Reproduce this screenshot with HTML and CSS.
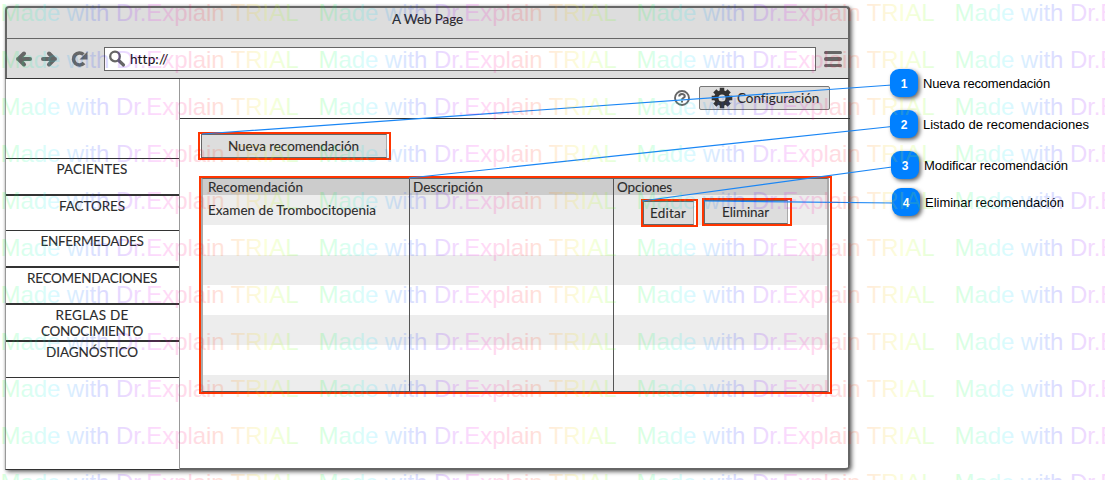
FILE: index.html
```html
<!DOCTYPE html>
<html lang="es">
<head>
<meta charset="utf-8">
<title>A Web Page</title>
<link rel="stylesheet" href="styles.css">
</head>
<body>
<main class="window">
  <header class="chrome">
    <div class="titlebar"><span class="page-title">A Web Page</span></div>
    <div class="toolbar">
      <svg class="nav-icons" width="78" height="24" viewBox="0 0 78 24" fill="none" stroke="#666" stroke-width="4" stroke-linecap="round" stroke-linejoin="round">
        <path d="M3 12H15M9 6.500L3.500 12L9 17.500"/>
        <path d="M28 12H40M34 6.500L39.500 12L34 17.500"/>
        <path d="M69 16A6 6 0 1 1 68.500 7.500" stroke-width="3.600" stroke-linecap="butt"/>
        <path d="M72.500 4.500V12.500H64.500Z" fill="#666" stroke="none"/>
      </svg>
      <div class="address">
        <svg width="18" height="18" viewBox="0 0 18 18" fill="none" stroke="#666"><circle cx="7" cy="6.500" r="4.800" stroke-width="2.300"/><path d="M10.800 10.500L15.500 15" stroke-width="3.200" stroke-linecap="round"/></svg>
        <span class="url">http://</span>
      </div>
      <div class="burger"><i></i><i></i><i></i></div>
    </div>
  </header>
  <div class="body">
    <nav class="sidebar">
      <div class="logo-space"></div>
      <div class="item h36"><span class="t-pac">PACIENTES</span></div>
      <div class="item h36 thick"><span class="t-fac">FACTORES</span></div>
      <div class="item h36"><span class="t-enf">ENFERMEDADES</span></div>
      <div class="item h37 thick"><span class="t-rec">RECOMENDACIONES</span></div>
      <div class="item h37 thick"><span class="t-reg">REGLAS DE</span><span class="t-con">CONOCIMIENTO</span></div>
      <div class="item h37 thick"><span class="t-dia">DIAGNÓSTICO</span></div>
      <div class="rest"></div>
    </nav>
    <section class="content">
      <div class="topbar">
        <svg width="18" height="18" viewBox="0 0 18 18" fill="none" stroke="#666"><circle cx="9" cy="9" r="7" stroke-width="1.900"/><path d="M6.200 7.600C6.200 4.300 11.800 4.300 11.800 7.200C11.800 9 9 8.700 9 10.500" stroke-width="2"/><path d="M9 11.700V13.500" stroke-width="2"/></svg>
        <div class="config">
          <svg width="22" height="22" viewBox="-11 -11 22 22"><g stroke="#333" stroke-width="4.500"><path d="M0 -10.300V-6M0 10.300V6M-10.300 0H-6M10.300 0H6M-7.200 -7.200L-4.500 -4.500M7.200 7.200L4.500 4.500M7.200 -7.200L4.500 -4.500M-7.200 7.200L-4.500 4.500"/><circle r="5.700" fill="none" stroke-width="4.300"/></g></svg>
          <span class="t-conf">Configuración</span>
        </div>
      </div>
      <div class="mark new"><div class="btn"><span class="t-new">Nueva recomendación</span></div></div>
      <div class="mark list">
        <div class="grid">
          <div class="col c1"><div class="head"><span class="t-h1">Recomendación</span></div><div class="cell"><span class="t-exam">Examen de Trombocitopenia</span></div></div>
          <div class="col c2"><div class="head"><span class="t-h2">Descripción</span></div></div>
          <div class="col c3"><div class="head"><span class="t-h3">Opciones</span></div>
            <div class="actions">
              <div class="mark edit"><div class="btn"><span class="t-edit">Editar</span></div></div>
              <div class="mark del"><div class="btn"><span class="t-del">Eliminar</span></div></div>
            </div>
          </div>
        </div>
      </div>
    </section>
  </div>
</main>

<svg class="overlay" width="1105" height="480" stroke="#1a86f5" stroke-width="1.200">
  <path d="M202 134L892 85M409 178L892 126.500M642 201L892 167M704 201L894 203" fill="none"/>
</svg>
<div class="callout n1"><b>1</b><span>Nueva recomendación</span></div>
<div class="callout n2"><b>2</b><span>Listado de recomendaciones</span></div>
<div class="callout n3"><b>3</b><span>Modificar recomendación</span></div>
<div class="callout n4"><b>4</b><span>Eliminar recomendación</span></div>

<svg class="overlay watermark" width="1105" height="480"></svg>
<script src="watermark.js"></script>
</body>
</html>
```
FILE: styles.css
```css
* { box-sizing: border-box; }
body { margin: 0; padding: 6px 0 0 5px; width: 1105px; height: 480px; overflow: hidden; position: relative; background: #fff; color: #2b2b2b; font: 13.5px/16px Lato, "Liberation Sans", sans-serif; -webkit-text-stroke: .1px; }
span { white-space: nowrap; }
svg { display: block; flex: none; }

.window { width: 845px; height: 464px; border-radius: 4px 4px 5px 0; background: linear-gradient(#666, #666) right / 2px 100% no-repeat #fff; border-bottom: 2px solid #666; box-shadow: 2px 2px 4px rgba(0, 0, 0, .55), 0 0 3px rgba(0, 0, 0, .2); }
.chrome { height: 73px; background: #ddd; border: solid #666; border-width: 2px 2px 0; border-bottom: 1px solid #333; border-radius: 4px 4px 0 0; }
.titlebar { height: 31px; border-bottom: 1px solid #666; text-align: center; padding-top: 3px; }
.toolbar { height: 39px; display: flex; align-items: flex-start; padding-top: 8px; }
.nav-icons { margin: 0 11px 0 8px; }
.address { width: 712px; height: 24px; border: 1px solid #666; background: #fff; display: flex; align-items: center; padding-left: 3px; gap: 4px; color: #111; }
.burger { margin: 4px 0 0 8px; display: grid; gap: 3px; }
.burger i { width: 18px; height: 3.300px; border-radius: 2px; background: #666; }

.body { display: flex; height: 391px; }
.sidebar { width: 175px; border: solid #999; border-width: 0 1px; border-bottom: 1px solid #333; display: flex; flex-direction: column; background: #fff; }
.logo-space { height: 79px; }
.item { border-top: 1px solid #333; display: flex; flex-direction: column; align-items: center; padding: 2px 1px 0 0; }
.item.thick { border-top-width: 2px; }
.h36 { height: 36px; }
.h37 { height: 37px; }
.rest { flex: 1; border-top: 1px solid #333; }

.content { width: 670px; }
.topbar { height: 40px; border-bottom: 1px solid #333; display: flex; align-items: flex-start; padding: 7px 0 0 493px; gap: 8px; }
.topbar > svg { margin-top: 3px; }
.config { width: 131px; height: 24px; border: 1px solid #777; border-radius: 2px; background: #ddd; display: flex; align-items: center; padding-left: 11px; gap: 4px; }
.config span { padding-bottom: 1px; }

.mark { border: 2px solid #ff3500; background: #fff; }
.btn { background: #ddd; border: 1px solid #666; border-right-color: #aaa; height: 24px; display: flex; align-items: center; justify-content: center; padding: 0 1px 1px 0; }
.new { width: 193px; height: 28px; margin: 13px 0 0 18px; padding: 0 2px 0 1px; }
.list { width: 633px; height: 218px; margin: 16px 0 0 19px; padding-right: 1px; }
.grid { height: 214px; display: flex; border-top: 1px solid #666; border-bottom: 1px solid #555; border-left: 2px solid #aaa; border-right: 2px solid #aaa; background: repeating-linear-gradient(#ededed 0 30px, #fff 30px 60px) 0 16px; }
.col { border-left: 1px solid #555; }
.c1 { width: 206px; border-left: 0; }
.c2 { width: 204px; }
.c3 { flex: 1; }
.head { height: 16px; background: #ccc; padding-left: 3px; display: flex; align-items: center; }
.c1 .head, .cell { padding-left: 5px; }
.cell { padding-top: 7px; }
.actions { display: flex; align-items: flex-start; gap: 4px; padding: 3px 0 0 27px; }
.edit { width: 57px; height: 28px; margin-top: 1px; padding-right: 2px; }
.del { width: 90px; height: 28px; padding-right: 2px; }

.overlay { position: absolute; left: 0; top: 0; }
.callout { position: absolute; display: flex; align-items: center; gap: 5px; font-family: "Liberation Sans", sans-serif; font-size: 13px; color: #000; -webkit-text-stroke: 0; }
.callout span { padding-top: 2px; }
.callout b { width: 28px; height: 28px; border-radius: 9px; background: #0080ff; color: #fff; display: grid; place-items: center; padding-top: 1px; font-size: 12px; box-shadow: 2px 2px 4px rgba(0, 0, 0, .6); }
.n1 { left: 890px; top: 69px; }
.n2 { left: 890px; top: 110px; }
.n3 { left: 891px; top: 151px; }
.n4 { left: 892px; top: 188px; }
.watermark { opacity: .14; font: 24px "Liberation Sans", sans-serif; -webkit-text-stroke: 0; pointer-events: none; }
```
FILE: watermark.js
```js
const layer = document.querySelector('.watermark');
const period = 318;
const stops = Array.from({ length: 13 }, (_, i) =>
  `<stop offset="${i / 12}" stop-color="hsl(${125 + i * 30} 100% 50%)"/>`).join('');
let marks = `<linearGradient id="hue" gradientUnits="userSpaceOnUse" x1="0" x2="${period}" y1="0" y2="0" spreadMethod="repeat">${stops}</linearGradient>`;
for (let y = 21; y < 510; y += 47) {
  for (let i = 0; i < 4; i++) {
    marks += `<text x="${0.5 + i * period}" y="${y}" textLength="298" fill="url(#hue)">Made with Dr.Explain TRIAL</text>`;
  }
}
layer.innerHTML = marks;

// Stretch each wireframe label to its drawn width.
const widths = {
  'page-title': 71, url: 38, 't-pac': 71, 't-fac': 66, 't-enf': 103, 't-rec': 130, 't-reg': 73, 't-con': 102, 't-dia': 92,
  't-conf': 82, 't-new': 131, 't-h1': 95, 't-exam': 168, 't-h2': 70, 't-h3': 55, 't-edit': 36, 't-del': 47
};
const fit = (el, width) => {
  const extra = width - el.getBoundingClientRect().width;
  el.style.letterSpacing = `${extra / el.textContent.length}px`;
};
for (const [name, width] of Object.entries(widths)) fit(document.querySelector('.' + name), width);
[127, 166, 144, 139].forEach((w, i) => fit(document.querySelector(`.n${i + 1} span`), w));
```
